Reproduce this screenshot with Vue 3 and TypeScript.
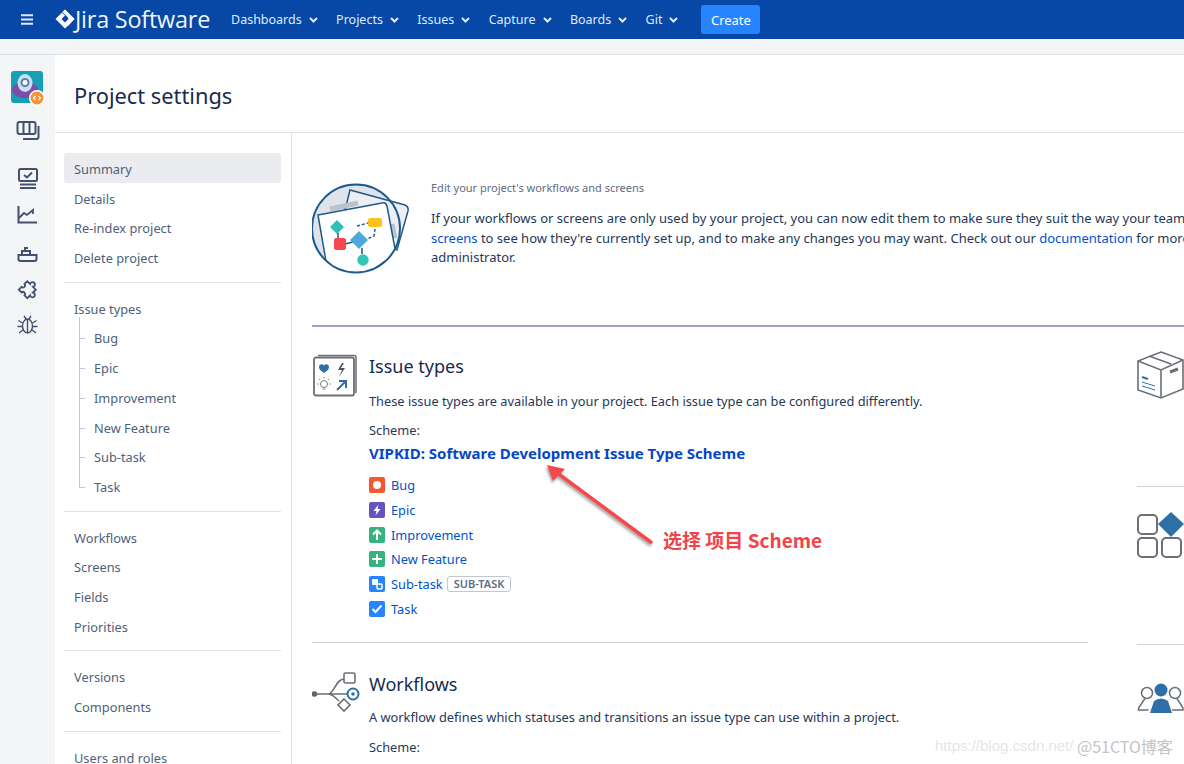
<script setup lang="ts">
const menus: string[] = ['Dashboards', 'Projects', 'Issues', 'Capture', 'Boards', 'Git']
const navGroups: { label: string; child?: boolean; active?: boolean }[][] = [
  [{ label: 'Summary', active: true }, { label: 'Details' }, { label: 'Re-index project' }, { label: 'Delete project' }],
  [{ label: 'Issue types' }, { label: 'Bug', child: true }, { label: 'Epic', child: true }, { label: 'Improvement', child: true }, { label: 'New Feature', child: true }, { label: 'Sub-task', child: true }, { label: 'Task', child: true }],
  [{ label: 'Workflows' }, { label: 'Screens' }, { label: 'Fields' }, { label: 'Priorities' }],
  [{ label: 'Versions' }, { label: 'Components' }],
  [{ label: 'Users and roles' }],
]
const issueTypes = [
  { name: 'Bug', color: '#f4582f', kind: 'bug' },
  { name: 'Epic', color: '#6554c0', kind: 'epic' },
  { name: 'Improvement', color: '#36b37e', kind: 'up' },
  { name: 'New Feature', color: '#36b37e', kind: 'plus' },
  { name: 'Sub-task', color: '#2684ff', kind: 'sub', tag: 'SUB-TASK' },
  { name: 'Task', color: '#2684ff', kind: 'task' },
]
</script>

<template>
  <div class="page">
    <header class="topbar">
      <svg class="burger" width="12" height="11" viewBox="0 0 12 11"><path d="M0 1.200h12M0 5.500h12M0 9.800h12" stroke="#dfe8f7" stroke-width="2"/></svg>
      <svg class="logo" width="20" height="20" viewBox="0 0 20 20"><path d="M10 0.500 19.500 10 10 19.500 0.500 10Z" fill="#fff"/><path d="M10 0.500 7 3.500 13.500 10 10 13.500 6.500 10 10 6.500 12 8.500 13.500 10Z" fill="#0747a6"/><path d="M10 0.500 7.500 3 14.500 10 10 14.500 13 17 19.500 10Z" fill="#fff"/></svg>
      <span class="brand">Jira Software</span>
      <nav class="menus">
        <span v-for="m in menus" :key="m" class="menu">{{ m }}
          <svg width="9" height="6" viewBox="0 0 9 6"><path d="M1 1l3.500 3.500L8 1" fill="none" stroke="#e4ecf9" stroke-width="2"/></svg>
        </span>
      </nav>
      <button class="create">Create</button>
    </header>
    <div class="strip"></div>
    <div class="body">
      <aside class="rail">
        <div class="avatar">
          <svg width="34" height="36" viewBox="0 0 34 36">
            <rect x="1" y="1" width="32" height="32" rx="3" fill="#17a0b4"/>
            <ellipse cx="15" cy="20" rx="13" ry="8" fill="#7a4cab"/>
            <ellipse cx="15" cy="13" rx="7.500" ry="9" fill="#c9dff0"/>
            <circle cx="15" cy="12.500" r="3.500" fill="#fff" stroke="#5b7fb5" stroke-width="2"/>
            <circle cx="27" cy="28" r="8" fill="#fff"/>
            <circle cx="27" cy="28" r="6.500" fill="#f79232"/>
            <path d="M25.500 26l-2 2 2 2M28.500 26l2 2-2 2" fill="none" stroke="#fff" stroke-width="1.200"/>
          </svg>
        </div>
        <svg class="ri gap0" width="24" height="22" viewBox="0 0 24 22" fill="none" stroke="#42526e" stroke-width="2"><rect x="1.500" y="2" width="18" height="12" rx="2"/><path d="M7.500 2v12M13.500 2v12M22.500 6v11a2 2 0 0 1-2 2H7"/></svg>
        <svg class="ri gap1" width="22" height="24" viewBox="0 0 22 24" fill="none" stroke="#42526e" stroke-width="2"><rect x="2" y="2" width="18" height="12" rx="1.500"/><path d="M7 8l3 2.500 5-5M3 17.500h16M3 21h16"/></svg>
        <svg class="ri gap2" width="21" height="18" viewBox="0 0 21 18" fill="none" stroke="#42526e" stroke-width="2"><path d="M1.500 0v16.500H20"/><path d="M2 12l5-5 3 2 6-5v4" stroke-width="1.800"/></svg>
        <svg class="ri gap3" width="21" height="16" viewBox="0 0 21 16" fill="none" stroke="#42526e" stroke-width="2"><path d="M1.500 8h18v4a2 2 0 0 1-2 2h-14a2 2 0 0 1-2-2zM5 8V4h8v4M8 4V1h3"/></svg>
        <svg class="ri gap4" width="24" height="24" viewBox="0 0 24 24" fill="none" stroke="#42526e" stroke-width="1.800"><path transform="rotate(45 12 12)" d="M6 7h4a2.400 2.400 0 1 1 4 0h4v4a2.400 2.400 0 1 1 0 4v4h-4a2 2 0 0 0-4 0H6v-4a2 2 0 0 0 0-4z"/></svg>
        <svg class="ri gap5" width="21" height="20" viewBox="0 0 21 20" fill="none" stroke="#42526e" stroke-width="1.400"><ellipse cx="10.500" cy="12" rx="5" ry="7"/><path d="M10.500 5v14M7 2l2 3M14 2l-2 3M5.500 9 1.500 6.500M5.500 12.500H0.500M6 16l-4 3M15.500 9l4-2.500M15.500 12.500h5M15 16l4 3"/></svg>
      </aside>
      <div class="workspace">
        <h1 class="title">Project settings</h1>
        <div class="columns">
          <nav class="side">
            <div v-for="(g, i) in navGroups" :key="i" class="group">
              <a v-for="it in g" :key="it.label" class="item" :class="{ active: it.active, child: it.child }">{{ it.label }}</a>
            </div>
          </nav>
          <main class="content">
            <section class="intro">
              <svg class="hero" width="100" height="94" viewBox="0 0 100 94">
                <clipPath id="heroClip"><circle cx="44" cy="46.500" r="44"/></clipPath>
                <circle cx="44" cy="46.500" r="44" fill="#dfe3ea"/>
                <path d="M38 8 L93 23 Q97 25 96 29 L85 68 L30 40Z" fill="#eceef2" stroke="#1f5a8c" stroke-width="1.500"/>
                <path d="M18 27l28-6" stroke="#bcc2cc" stroke-width="5"/>
                <path d="M80 42l3 14" stroke="#bcc2cc" stroke-width="5"/>
                <g clip-path="url(#heroClip)"><path d="M6 33 L70 21 Q74 20 75 24 L84 72 L50 95 L15 85Z" fill="#fff" stroke="#1f5a8c" stroke-width="1.500"/></g>
                <circle cx="44" cy="46.500" r="44" fill="none" stroke="#1f5a8c" stroke-width="2"/>
                <path d="M25 38 L32 45 L25 52 L18 45Z" fill="#2fbfb3"/>
                <path d="M26 51v6M33 62l8-2M50 66v6" stroke="#1f5a8c" stroke-width="1.500"/>
                <rect x="22" y="56" width="12" height="12" rx="2" fill="#f8484e"/>
                <path d="M47 49 L56 58 L47 67 L38 58Z" fill="#4fa8dc"/>
                <circle cx="51" cy="78" r="5.700" fill="#2fc5bb"/>
                <rect x="56" y="36" width="14" height="9" rx="2" fill="#fdc120"/>
                <path d="M45 44l11-3M63 47l-1 7-7 3" fill="none" stroke="#1f5a8c" stroke-width="1.500" stroke-dasharray="3 2"/>
              </svg>
              <div class="introtext">
                <div class="introhead">Edit your project's workflows and screens</div>
                <p>If your workflows or screens are only used by your project, you can now edit them to make sure they suit the way your team</p>
                <p><a class="lnk">screens</a> to see how they're currently set up, and to make any changes you may want. Check out our <a class="lnk">documentation</a> for more</p>
                <p>administrator.</p>
              </div>
            </section>
            <div class="purple"></div>
            <div class="grid">
              <div class="mainc">
                <section class="block">
                  <svg class="bicon" width="46" height="46" viewBox="0 0 46 46">
                    <path d="M6 3.500h36.500a1.500 1.500 0 0 1 1.500 1.500v36" fill="none" stroke="#6b6f76" stroke-width="1.500"/>
                    <rect x="2" y="5.500" width="40" height="38" rx="2" fill="#fff" stroke="#6b6f76" stroke-width="1.800"/>
                    <path d="M12 22c-3-2-5-3.500-5-6 0-3 3.500-3.500 5-1.500 1.500-2 5-1.500 5 1.500 0 2.500-2 4-5 6z" fill="#2f6fa8" transform="translate(0 -1)"/>
                    <path d="M30 11l-4 7h4l-3 7 6-9h-4l3-5z" fill="#50545a"/>
                    <circle cx="12" cy="32" r="3.500" fill="none" stroke="#7a7f87"/>
                    <path d="M10.500 37h3M12 25v1.500M5 32h1.500M17.500 32H19M7 27l1 1M17 27l-1 1" stroke="#7a7f87"/>
                    <path d="M25 38l9-9M27 29h7v7" fill="none" stroke="#2f6fa8" stroke-width="2"/>
                  </svg>
                  <div class="btext">
                    <h2>Issue types</h2>
                    <p class="desc">These issue types are available in your project. Each issue type can be configured differently.</p>
                    <div class="scheme">Scheme:</div>
                    <a class="schemelink">VIPKID: Software Development Issue Type Scheme</a>
                    <ul class="types">
                      <li v-for="t in issueTypes" :key="t.name">
                        <svg class="ticon" width="16" height="16" viewBox="0 0 16 16">
                          <rect width="16" height="16" rx="2" :fill="t.color"/>
                          <circle v-if="t.kind === 'bug'" cx="8" cy="8" r="4" fill="#fff"/>
                          <path v-else-if="t.kind === 'epic'" d="M9.500 2.500 4.500 9h3l-1 4.500L11.500 7h-3z" fill="#fff"/>
                          <path v-else-if="t.kind === 'up'" d="M8 13V4M4 7.500 8 3.500l4 4" fill="none" stroke="#fff" stroke-width="2"/>
                          <path v-else-if="t.kind === 'plus'" d="M8 3v10M3 8h10" stroke="#fff" stroke-width="2"/>
                          <g v-else-if="t.kind === 'sub'"><rect x="3" y="3" width="6" height="6" rx="1" fill="#fff"/><rect x="8" y="8" width="5" height="5" rx="1" fill="none" stroke="#fff" stroke-width="1.500"/></g>
                          <path v-else d="M3.500 8l3 3 6-6.500" fill="none" stroke="#fff" stroke-width="2"/>
                        </svg>
                        <a class="lnk">{{ t.name }}</a>
                        <span v-if="t.tag" class="tag">{{ t.tag }}</span>
                      </li>
                    </ul>
                  </div>
                </section>
                <div class="rule"></div>
                <section class="block second">
                  <svg class="bicon wf" width="50" height="42" viewBox="0 0 50 42" fill="none">
                    <circle cx="2.500" cy="23" r="2.800" fill="#5e6269"/>
                    <path d="M2.500 23H36M16 23c6 0 8-15 16-15M16 23c5 0 6 3 11 7" stroke="#6b6f76" stroke-width="1.600"/>
                    <rect x="32" y="2" width="11" height="10" rx="1.500" stroke="#6b6f76" stroke-width="1.600" fill="#fff"/>
                    <path d="M32 28l6 6-6 6-6-6z" stroke="#6b6f76" stroke-width="1.600" fill="#fff"/>
                    <circle cx="41" cy="23" r="5.500" stroke="#2f6fa8" stroke-width="2" fill="#fff"/>
                    <circle cx="41" cy="23" r="1.800" fill="#2f6fa8"/>
                  </svg>
                  <div class="btext">
                    <h2>Workflows</h2>
                    <p class="desc">A workflow defines which statuses and transitions an issue type can use within a project.</p>
                    <div class="scheme">Scheme:</div>
                  </div>
                </section>
              </div>
              <div class="sidec">
                <svg class="sicon box" width="47" height="48" viewBox="0 0 47 48" fill="none" stroke="#6b6f76" stroke-width="1.600">
                  <path d="M24 1 46 9v29l-22 9-23-8V10z" fill="#fff"/>
                  <path d="M1 10l23 9 22-10M24 19v28M12 5l22 8"/>
                  <path d="M33 21l8-3" stroke-width="3"/>
                  <path d="M5 26l6 2" stroke="#2f6fa8" stroke-width="2"/>
                  <path d="M5 31l13 4M5 35l13 4" stroke="#2f6fa8" stroke-width="1"/>
                </svg>
                <div class="srule first"></div>
                <svg class="sicon" width="47" height="46" viewBox="0 0 47 46" fill="none" stroke="#6b6f76" stroke-width="2">
                  <rect x="1" y="3" width="19" height="19" rx="4"/>
                  <rect x="1" y="26" width="19" height="19" rx="4"/>
                  <rect x="25" y="26" width="19" height="19" rx="4"/>
                  <path d="M34 0 47 12 34 25 21 12Z" fill="#2f6fa8" stroke="none"/>
                </svg>
                <div class="srule second"></div>
                <svg class="sicon" width="47" height="32" viewBox="0 0 47 32" fill="none">
                  <circle cx="10" cy="10" r="5.500" stroke="#6b6f76" stroke-width="1.500"/>
                  <circle cx="38" cy="10" r="5.500" stroke="#6b6f76" stroke-width="1.500"/>
                  <path d="M8 15.500 1.500 25v2h10M40 15.500l6 9.500v2H35" stroke="#6b6f76" stroke-width="1.500"/>
                  <circle cx="24" cy="7" r="6.500" fill="#2f6fa8"/>
                  <path d="M13 30l4-12q7-5 14 0l4 12z" fill="#2f6fa8"/>
                </svg>
              </div>
            </div>
          </main>
        </div>
      </div>
    </div>
    <svg class="arrow" width="120" height="90" viewBox="0 0 120 90">
      <defs><filter id="ashadow" x="-20%" y="-20%" width="140%" height="140%"><feDropShadow dx="-1" dy="2" stdDeviation="1.500" flood-color="#555" flood-opacity=".6"/></filter></defs>
      <g filter="url(#ashadow)">
        <path d="M107 81 11 10" stroke="#f4494c" stroke-width="3.500"/>
        <path d="M2 3 20 7 8 19Z" fill="#f4494c"/>
      </g>
    </svg>
    <div class="note">选择 项目 Scheme</div>
    <div class="wm1">https://blog.csdn.net/</div>
    <div class="wm2">@51CTO博客</div>
  </div>
</template>

<style>
html, body { margin: 0; padding: 0; overflow: hidden; background: #fff; }
</style>

<style scoped>
.page { position: relative; width: 1184px; height: 764px; overflow: hidden; font-family: "Noto Sans", "Open Sans", sans-serif; font-size: 12.800px; color: #253858; background: #fff; }
.topbar { height: 39px; background: #0747a6; display: flex; align-items: center; box-sizing: border-box; padding-left: 21px; color: #deebff; }
.burger { margin-right: 22px; }
.logo { margin-bottom: 2px; }
.brand { font-family: "Open Sans", sans-serif; font-size: 23.400px; letter-spacing: -0.2px; color: #f0f4fb; width: 136px; white-space: nowrap; margin-bottom: 2px; }
.menus { display: flex; margin-left: 20px; gap: 18.400px; }
.menu { display: inline-flex; align-items: center; gap: 7px; font-size: 12.500px; color: #deebff; }
.create { margin-left: 23px; width: 59px; height: 29px; background: #2684ff; border: 0; border-radius: 3px; color: #fff; font: 13px "Noto Sans", sans-serif; padding: 0; }
.strip { height: 15px; background: #f4f5f7; border-bottom: 1px solid #dcdfe4; }
.body { display: flex; height: 709px; }
.rail { width: 55px; flex: none; background: #f4f5f7; display: flex; flex-direction: column; align-items: center; box-sizing: border-box; padding-top: 15px; }
.avatar { height: 36px; margin-right: 2px; }
.ri { flex: none; }
.gap0 { margin-top: 14px; }
.gap1 { margin-top: 25px; }
.gap2 { margin-top: 15px; }
.gap3 { margin-top: 23px; }
.gap4 { margin-top: 14px; }
.gap5 { margin-top: 13px; }
.workspace { flex: 1; min-width: 0; }
.title { height: 78px; margin: 0; box-sizing: border-box; padding-left: 19px; font-weight: 400; font-size: 21.800px; line-height: 81px; color: #172b4d; border-bottom: 1px solid #dfe1e6; }
.columns { display: flex; height: 631px; }
.side { width: 237px; flex: none; box-sizing: border-box; padding: 20px 10px 0 9px; border-right: 1px solid #dfe1e6; }
.group { padding-bottom: 10px; margin-bottom: 10px; border-bottom: 1px solid #dfe1e6; }
.group:last-child { border-bottom: 0; }
.item { display: block; height: 29.700px; line-height: 32px; padding-left: 10px; color: #505f79; border-radius: 3px; white-space: nowrap; position: relative; }
.item.active { background: #ebecf0; }
.item.child { padding-left: 30px; }
.item.child::before { content: ""; position: absolute; left: 15px; top: -14px; height: 30px; width: 5px; border-left: 1px solid #c1c7d0; border-bottom: 1px solid #c1c7d0; }
.item:not(.child) + .item.child::before { top: -5px; height: 21px; }
.content { flex: 1; min-width: 0; box-sizing: border-box; padding: 50px 0 0 20px; overflow: hidden; }
.intro { display: flex; height: 142px; }
.hero { flex: none; margin: -1px 19px 0 0; }
.introtext { white-space: nowrap; font-size: 13px; }
.introhead { font-size: 11px; color: #5e6c84; line-height: 14px; margin: -2px 0 14px; }
.introtext p { margin: 0; line-height: 19.700px; }
.lnk { color: #0052cc; text-decoration: none; }
.purple { height: 2px; background: #a39bcb; }
.grid { display: flex; gap: 49px; }
.mainc { width: 776px; flex: none; }
.block { display: flex; padding-top: 25px; }
.block.second { padding-top: 26px; }
.bicon { flex: none; margin: 0 11px 0 0; }
.bicon.wf { margin: 2px 7px 0 0; }
.btext { min-width: 0; }
.btext h2 { margin: -1px 0 0; font-weight: 400; font-size: 18px; line-height: 30px; color: #172b4d; }
.second.block h2 { margin-top: 0; }
.desc { margin: 10px 0 0; line-height: 20px; }
.scheme { margin-top: 9px; line-height: 20px; }
.second .desc { margin-top: 8px; }
.second .scheme { margin-top: 10px; }
.schemelink { display: block; font-weight: 700; font-size: 15px; line-height: 26px; color: #0747c6; white-space: nowrap; }
.types { list-style: none; margin: 7px 0 0; padding: 0; }
.types li { display: flex; align-items: center; height: 24.700px; }
.ticon { margin-right: 6px; flex: none; }
.tag { margin-left: 4px; font-size: 11px; font-weight: 600; color: #5e6c84; border: 1px solid #c1c7d0; border-radius: 3px; line-height: 14px; padding: 0 6px; }
.rule { height: 1px; background: #cfd2d8; margin-top: 21px; }
.sidec { flex: 1; min-width: 0; padding-top: 24px; }
.sicon { display: block; }
.srule { height: 1px; background: #cfd2d8; }
.srule.first { margin-top: 87px; margin-bottom: 25px; }
.srule.second { margin-top: 86px; margin-bottom: 38px; }
.arrow { position: absolute; left: 545px; top: 462px; }
.note { position: absolute; left: 663px; top: 526px; font: 700 19px/28px "Noto Sans CJK SC", "Noto Sans", sans-serif; color: #f0444a; white-space: nowrap; }
.wm1 { position: absolute; left: 935px; top: 737px; font: 15px/18px "Liberation Sans", sans-serif; color: #e4e6e9; white-space: nowrap; }
.wm2 { position: absolute; left: 1077px; top: 735px; font: 16px/22px "Noto Sans CJK SC", "Liberation Sans", sans-serif; color: #bfc3c8; white-space: nowrap; }
</style>
